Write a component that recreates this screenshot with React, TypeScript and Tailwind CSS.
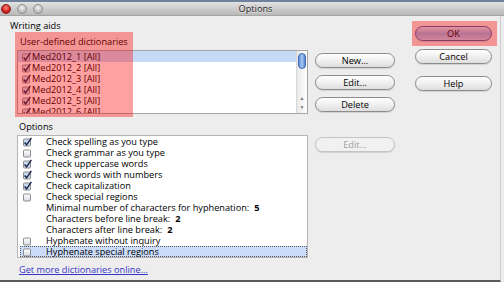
import React from 'react';

const font = "font-['Open_Sans',sans-serif] text-[9.2px] leading-[11px]";

const Check = ({ checked }: { checked: boolean }) => (
  <svg width="9" height="10" viewBox="0 0 9 10" className="shrink-0">
    <defs>
      <linearGradient id="cbg" x1="0" y1="0" x2="0" y2="1">
        <stop offset="0" stopColor="#ffffff" />
        <stop offset="1" stopColor="#d6dbe3" />
      </linearGradient>
    </defs>
    <rect x="0.5" y="2" width="7" height="7" rx="1" fill={checked ? '#c9d9ee' : 'url(#cbg)'} stroke="#8d8d8d" />
    {checked && <path d="M1.6 5.4 L3.6 7.8 L8.4 0.8" fill="none" stroke="#20284a" strokeWidth="1.5" />}
  </svg>
);

const Pill = ({ label, disabled, wide }: { label: string; disabled?: boolean; wide?: boolean }) => (
  <div
    className={`h-[15px] ${wide ? 'w-[77px]' : 'w-[80px]'} rounded-full border flex items-center justify-center ${
      disabled
        ? 'border-[#c4c4c4] bg-[#f1f1f1] text-[#a0a0a0]'
        : 'border-[#8c8c8c] bg-gradient-to-b from-[#ffffff] via-[#f0f0f0] to-[#dedede] text-[#000]'
    } shadow-[0_1px_1px_rgba(0,0,0,0.12)]`}
  >
    {label}
  </div>
);

const dicts = ['Med2012_1 [All]', 'Med2012_2 [All]', 'Med2012_3 [All]', 'Med2012_4 [All]', 'Med2012_5 [All]', 'Med2012_6 [All]'];

const opts = [
  { box: true, checked: true, label: 'Check spelling as you type' },
  { box: true, checked: false, label: 'Check grammar as you type' },
  { box: true, checked: true, label: 'Check uppercase words' },
  { box: true, checked: true, label: 'Check words with numbers' },
  { box: true, checked: true, label: 'Check capitalization' },
  { box: true, checked: false, label: 'Check special regions' },
  { box: false, checked: false, label: 'Minimal number of characters for hyphenation:', value: '5' },
  { box: false, checked: false, label: 'Characters before line break:', value: '2' },
  { box: false, checked: false, label: 'Characters after line break:', value: '2' },
  { box: true, checked: false, label: 'Hyphenate without inquiry' },
  { box: true, checked: false, label: 'Hyphenate special regions', selected: true },
];

export default function App() {
  return (
    <div className={`relative w-[504px] h-[282px] overflow-hidden bg-[#ededed] text-[#000] ${font}`}>
      {/* title bar */}
      <div className="relative h-[16px] border-t-2 border-[#6f819b] border-b border-b-[#a3a3a3] bg-gradient-to-b from-[#e2e2e2] to-[#b9b9b9] flex items-center">
        <div className="flex items-center gap-[6px] pl-[1px]">
          <span className="w-[10px] h-[10px] rounded-full bg-[radial-gradient(circle_at_50%_35%,#ff8a80,#d0201a_60%,#8c0f0b)] border border-[#8a1a14]" />
          <span className="w-[10px] h-[10px] rounded-full bg-[radial-gradient(circle_at_50%_35%,#f2f2f2,#c2c2c2_60%,#9d9d9d)] border border-[#8f8f8f]" />
          <span className="w-[10px] h-[10px] rounded-full bg-[radial-gradient(circle_at_50%_35%,#f2f2f2,#c2c2c2_60%,#9d9d9d)] border border-[#8f8f8f]" />
        </div>
        <div className="flex-1 text-center pr-[36px] text-[#2a2a2a] [text-shadow:0_1px_0_rgba(255,255,255,0.5)]">Options</div>
      </div>

      {/* body */}
      <div className="h-[266px] flex border-b-2 border-[#5a5a5a] border-r border-r-[#cfcfcf] mr-[3px]">
        {/* left column */}
        <div className="w-[308px] flex flex-col pt-[4px]">
          <div className="pl-[10px]">Writing aids</div>
          <div className="pl-[20px] mt-[5px]">User-defined dictionaries</div>
          <div className="ml-[17px] mt-[3px] w-[291px] h-[64px] bg-white border border-[#a5a5a5] flex overflow-hidden">
            <div className="flex-1 flex flex-col">
              {dicts.map((d, i) => (
                <div key={d} className={`h-[11px] shrink-0 flex items-center pl-[4px] ${i === 0 ? 'bg-[#c6daf7]' : ''}`}>
                  <Check checked />
                  <span className="ml-[1px]">{d}</span>
                </div>
              ))}
            </div>
            <div className="w-[11px] border-l border-[#d6d6d6] bg-gradient-to-r from-[#e9e9e9] to-[#ffffff] flex flex-col items-center">
              <div className="mt-[2px] w-[8px] h-[16px] rounded-full border border-[#3d69b5] bg-gradient-to-r from-[#5f8fd6] via-[#a9c9f4] to-[#4f7fcc]" />
              <div className="flex-1" />
              <div className="text-[5px] leading-[9px] text-[#777]">▲</div>
              <div className="text-[5px] leading-[9px] text-[#777] mb-[1px]">▼</div>
            </div>
          </div>

          <div className="pl-[19px] mt-[7px]">Options</div>
          <div className="ml-[17px] mt-[3px] w-[291px] h-[123px] bg-white border border-[#b5b5b5] flex flex-col">
            {opts.map((o) => (
              <div
                key={o.label}
                className={`h-[11px] ml-[2px] flex items-center ${
                  o.selected ? 'bg-[#cadcfa] outline-dotted outline-1 -outline-offset-1 outline-[#555]' : ''
                }`}
              >
                <div className="w-[26px] pl-[3px] flex items-center">{o.box && <Check checked={o.checked} />}</div>
                <span>{o.label}</span>
                {o.value && <span className="ml-[5px] font-bold">{o.value}</span>}
              </div>
            ))}
          </div>

          <div className="pl-[19px] mt-[6px] text-[#3535c8] underline">Get more dictionaries online...</div>
        </div>

        {/* middle column */}
        <div className="ml-[7px] flex flex-col pt-[37px]">
          <Pill label="New..." />
          <div className="mt-[7px]"><Pill label="Edit..." /></div>
          <div className="mt-[7px]"><Pill label="Delete" /></div>
          <div className="mt-[25px]"><Pill label="Edit..." disabled /></div>
        </div>

        {/* right column */}
        <div className="ml-[20px] flex flex-col pt-[10px]">
          <div className="h-[15px] w-[77px] rounded-full border border-[#3f63a6] bg-gradient-to-b from-[#d6e6fb] via-[#8fb6ec] to-[#b8d3f7] flex items-center justify-center shadow-[0_1px_1px_rgba(0,0,0,0.15)]">
            OK
          </div>
          <div className="mt-[8px]"><Pill label="Cancel" wide /></div>
          <div className="mt-[12px]"><Pill label="Help" wide /></div>
        </div>
      </div>

      {/* annotation highlights */}
      <div className="absolute left-[15px] top-[32px] w-[118px] h-[85px] bg-[rgba(255,0,0,0.37)] pointer-events-none" />
      <div className="absolute left-[412px] top-[21px] w-[85px] h-[25px] bg-[rgba(255,0,0,0.37)] pointer-events-none" />
    </div>
  );
}
